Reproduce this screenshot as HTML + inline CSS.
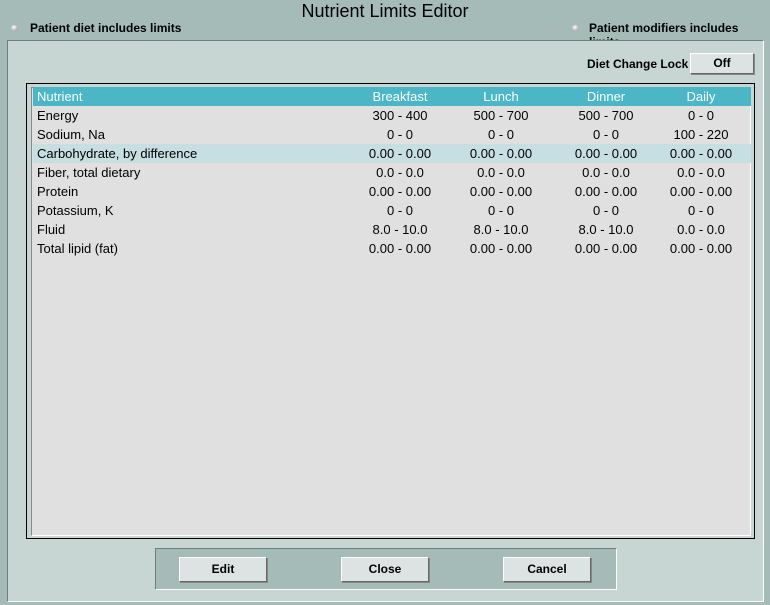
<!DOCTYPE html><html><head><style>
body{margin:0;width:770px;height:605px;background:#a4bbb7;position:relative;overflow:hidden;font-family:"Liberation Sans",sans-serif;}
.a{position:absolute}
.t{font-size:13px;color:#000}
.b{font-weight:bold;font-size:12px}
.btn{position:absolute;background:#dde3e2;border:1px solid #fff;border-right-color:#666;border-bottom-color:#666;box-shadow:1px 1px 0 #888;text-align:center;font-weight:bold;font-size:12px;box-sizing:border-box}
.row{position:absolute;left:33px;width:718px;height:19px;font-size:13px;line-height:19px}
.row span{position:absolute;text-align:center;width:100px}
.dot{position:absolute;width:7px;height:6px;border-radius:50%;background:radial-gradient(circle at 40% 35%,#fff,#888)}
</style></head><body>
<div class="a" style="left:0;top:1px;width:770px;text-align:center;font-size:18px">Nutrient Limits Editor</div>
<div class="dot" style="left:11px;top:25px"></div>
<div class="a b" style="left:30px;top:21px">Patient diet includes limits</div>
<div class="dot" style="left:572px;top:25px"></div>
<div class="a b" style="left:589px;top:21px">Patient modifiers includes limits</div>
<div class="a" style="left:7px;top:40px;width:755px;height:560px;background:#c8d6d3;border:1px solid #fff;border-top-color:#6f7f7c;border-left-color:#6f7f7c"></div>
<div class="a b" style="left:587px;top:57px">Diet Change Lock</div>
<div class="btn" style="left:690px;top:53px;width:64px;height:21px;line-height:19px">Off</div>
<div class="a" style="left:26px;top:83px;width:727px;height:454px;border:1px solid #000;background:#c8d6d3"></div>
<div class="a" style="left:31px;top:87px;width:718px;height:447px;background:#e0e0e0;border:1px solid #888;border-right-color:#fff;border-bottom-color:#fff"></div>
<div class="row" style="top:87px;background:#4ab6c6;color:#fff"><span style="left:0;text-align:left;padding-left:4px">Nutrient</span><span style="left:317px">Breakfast</span><span style="left:418px">Lunch</span><span style="left:523px">Dinner</span><span style="left:618px">Daily</span></div>
<div class="row" style="top:106px"><span style="left:0;text-align:left;padding-left:4px;width:300px">Energy</span><span style="left:317px">300 - 400</span><span style="left:418px">500 - 700</span><span style="left:523px">500 - 700</span><span style="left:618px">0 - 0</span></div>
<div class="row" style="top:125px"><span style="left:0;text-align:left;padding-left:4px;width:300px">Sodium, Na</span><span style="left:317px">0 - 0</span><span style="left:418px">0 - 0</span><span style="left:523px">0 - 0</span><span style="left:618px">100 - 220</span></div>
<div class="row" style="top:144px;background:#c7dee2"><span style="left:0;text-align:left;padding-left:4px;width:300px">Carbohydrate, by difference</span><span style="left:317px">0.00 - 0.00</span><span style="left:418px">0.00 - 0.00</span><span style="left:523px">0.00 - 0.00</span><span style="left:618px">0.00 - 0.00</span></div>
<div class="row" style="top:163px"><span style="left:0;text-align:left;padding-left:4px;width:300px">Fiber, total dietary</span><span style="left:317px">0.0 - 0.0</span><span style="left:418px">0.0 - 0.0</span><span style="left:523px">0.0 - 0.0</span><span style="left:618px">0.0 - 0.0</span></div>
<div class="row" style="top:182px"><span style="left:0;text-align:left;padding-left:4px;width:300px">Protein</span><span style="left:317px">0.00 - 0.00</span><span style="left:418px">0.00 - 0.00</span><span style="left:523px">0.00 - 0.00</span><span style="left:618px">0.00 - 0.00</span></div>
<div class="row" style="top:201px"><span style="left:0;text-align:left;padding-left:4px;width:300px">Potassium, K</span><span style="left:317px">0 - 0</span><span style="left:418px">0 - 0</span><span style="left:523px">0 - 0</span><span style="left:618px">0 - 0</span></div>
<div class="row" style="top:220px"><span style="left:0;text-align:left;padding-left:4px;width:300px">Fluid</span><span style="left:317px">8.0 - 10.0</span><span style="left:418px">8.0 - 10.0</span><span style="left:523px">8.0 - 10.0</span><span style="left:618px">0.0 - 0.0</span></div>
<div class="row" style="top:239px"><span style="left:0;text-align:left;padding-left:4px;width:300px">Total lipid (fat)</span><span style="left:317px">0.00 - 0.00</span><span style="left:418px">0.00 - 0.00</span><span style="left:523px">0.00 - 0.00</span><span style="left:618px">0.00 - 0.00</span></div>
<div class="a" style="left:155px;top:548px;width:460px;height:40px;background:#a4bbb7;border:1px solid #fff;border-top-color:#6f7f7c;border-left-color:#6f7f7c"></div>
<div class="btn" style="left:179px;top:557px;width:88px;height:25px;line-height:23px">Edit</div>
<div class="btn" style="left:341px;top:557px;width:88px;height:25px;line-height:23px">Close</div>
<div class="btn" style="left:503px;top:557px;width:88px;height:25px;line-height:23px">Cancel</div>
</body></html>
